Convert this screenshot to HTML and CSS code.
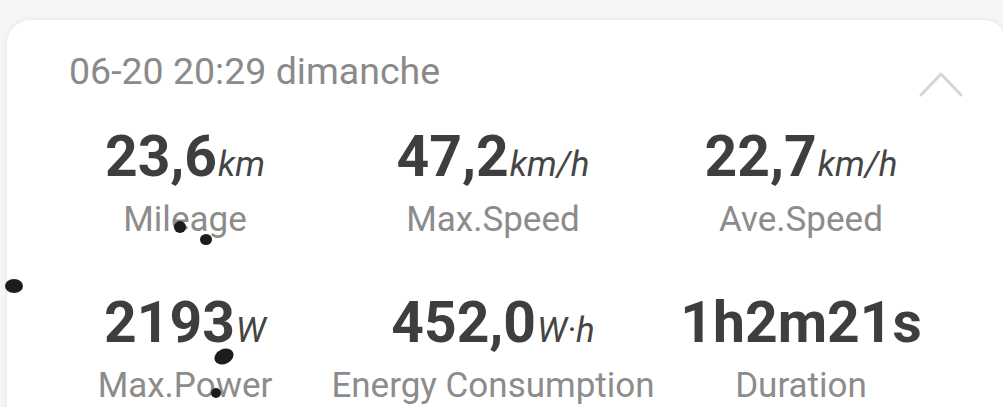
FILE: index.html
```html
<!DOCTYPE html>
<html>
<head>
<meta charset="utf-8">
<link rel="stylesheet" href="styles.css">
</head>
<body>
<div class="card">
  <div class="header">
    <div class="date">06-20 20:29 dimanche</div>
    <svg class="chevron" width="46" height="28" viewBox="0 0 46 28">
      <polyline points="3,25 23,4 43,25" fill="none" stroke="#d6d6d6" stroke-width="3" stroke-linecap="round" stroke-linejoin="round"/>
    </svg>
  </div>
  <div class="stats">
    <div class="stat"><div class="value">23,6<span class="unit">km</span></div><div class="label">Mileage</div></div>
    <div class="stat"><div class="value">47,2<span class="unit">km/h</span></div><div class="label">Max.Speed</div></div>
    <div class="stat"><div class="value">22,7<span class="unit">km/h</span></div><div class="label">Ave.Speed</div></div>
    <div class="stat"><div class="value">2193<span class="unit">W</span></div><div class="label">Max.Power</div></div>
    <div class="stat"><div class="value">452,0<span class="unit">W·h</span></div><div class="label">Energy Consumption</div></div>
    <div class="stat"><div class="value">1h2m21s</div><div class="label">Duration</div></div>
  </div>
</div>
<span class="dot d1"></span>
<span class="dot d2"></span>
<span class="dot d3"></span>
<span class="dot d4"></span>
<span class="dot d5"></span>
</body>
</html>
```
FILE: styles.css
```css
html, body {
  margin: 0;
  padding: 0;
}
body {
  background: #f6f6f6;
  width: 1003px;
  height: 407px;
  overflow: hidden;
  position: relative;
  font-family: Roboto, "Liberation Sans", sans-serif;
}
.card {
  margin: 20px 0 0 7px;
  width: 1000px;
  height: 420px;
  background: #ffffff;
  border-radius: 24px;
  box-shadow: 0 0 6px rgba(0, 0, 0, 0.08);
  padding-top: 29px;
  box-sizing: border-box;
}
.header {
  display: flex;
  justify-content: space-between;
  align-items: flex-start;
  padding-left: 62px;
  padding-right: 43px;
}
.date {
  font-size: 37.5px;
  line-height: 44px;
  color: #8a8a8a;
}
.chevron {
  margin-top: 21px;
  display: block;
}
.stats {
  display: grid;
  grid-template-columns: repeat(3, 308px);
  row-gap: 51px;
  margin-top: 27px;
  padding-left: 24px;
}
.stat {
  display: flex;
  flex-direction: column;
  align-items: center;
}
.value {
  font-size: 57px;
  line-height: 64px;
  font-weight: 700;
  color: #3e3e3e;
  white-space: nowrap;
}
.unit {
  font-size: 35px;
  line-height: 1;
  font-weight: 400;
  font-style: italic;
  color: #454545;
  margin-left: 1px;
}
.label {
  margin-top: 11px;
  font-size: 35px;
  line-height: 40px;
  color: #8c8c8c;
  white-space: nowrap;
}
.dot {
  position: absolute;
  background: #1c1c1c;
  border-radius: 50%;
}
.d1 { left: 174px; top: 221px; width: 12px; height: 12px; }
.d2 { left: 200px; top: 234px; width: 12px; height: 11px; }
.d3 { left: 5px; top: 279px; width: 18px; height: 14px; }
.d4 { left: 214px; top: 349px; width: 20px; height: 15px; transform: rotate(-25deg); }
.d5 { left: 211px; top: 388px; width: 10px; height: 10px; }
```
